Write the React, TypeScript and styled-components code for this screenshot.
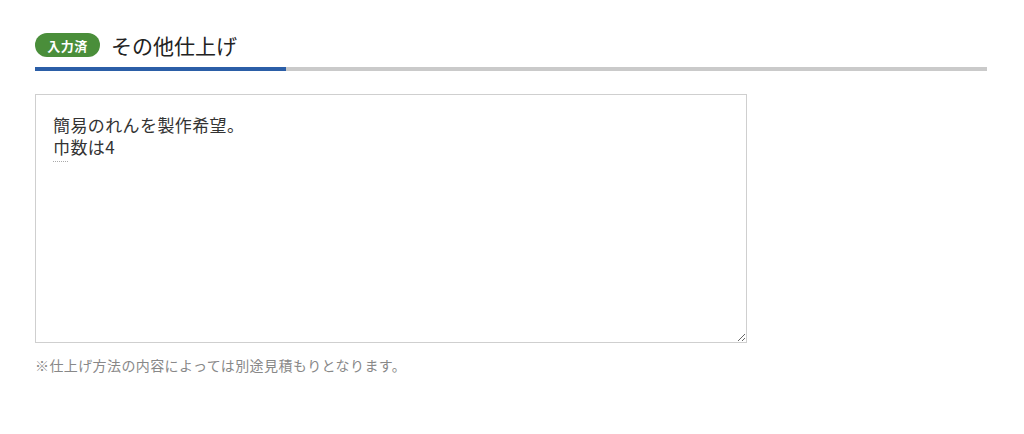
import styled, { createGlobalStyle } from "styled-components";

const GlobalStyle = createGlobalStyle`
  html, body {
    margin: 0;
    padding: 0;
    background: #fff;
  }
  body {
    font-family: "Noto Sans CJK JP", "Noto Sans", sans-serif;
    color: #222;
  }
`;

const App = () => {
  return (
    <>
      <GlobalStyle />
      <Section>
        <Header>
          <Badge>入力済</Badge>
          <Title>その他仕上げ</Title>
        </Header>
        <Progress>
          <ProgressFill $ratio={0.264} />
        </Progress>
        <FieldWrapper>
          <TextArea
            readOnly
            spellCheck={false}
            value={"簡易のれんを製作希望。\n巾数は4"}
          />
          <ImeMark />
        </FieldWrapper>
        <Note>※仕上げ方法の内容によっては別途見積もりとなります。</Note>
      </Section>
    </>
  );
};

export default App;

const Section = styled.div`
  width: 952px;
  padding: 31px 0 0 35px;
  display: flex;
  flex-direction: column;
`;

const Header = styled.div`
  display: flex;
  align-items: center;
  gap: 11px;
  height: 28px;
`;

const Badge = styled.span`
  display: inline-flex;
  align-items: center;
  justify-content: center;
  width: 65px;
  height: 24px;
  border-radius: 12px;
  background-color: #4a8e3a;
  color: #fff;
  font-size: 13px;
  font-weight: 700;
  letter-spacing: 0.5px;
`;

const Title = styled.h2`
  margin: 0;
  font-size: 21px;
  font-weight: 400;
  color: #222;
  line-height: 1;
`;

const Progress = styled.div`
  margin-top: 8px;
  width: 100%;
  height: 4px;
  background-color: #cacaca;
`;

const ProgressFill = styled.div<{ $ratio: number }>`
  width: ${(p) => p.$ratio * 100}%;
  height: 100%;
  background-color: #2b5ea7;
`;

const FieldWrapper = styled.div`
  position: relative;
  margin-top: 23px;
  width: 712px;
  height: 249px;
`;

const TextArea = styled.textarea`
  box-sizing: border-box;
  width: 100%;
  height: 100%;
  padding: 19px 17px;
  border: 1px solid #cfcfcf;
  border-radius: 0;
  outline: none;
  resize: both;
  font-family: "Noto Sans CJK JP", "Noto Sans", sans-serif;
  font-size: 17px;
  line-height: 22px;
  letter-spacing: 0.4px;
  color: #333;
  background: #fff;
`;

const ImeMark = styled.span`
  position: absolute;
  left: 18px;
  top: 67px;
  width: 15px;
  border-top: 1px dotted #aaa;
`;

const Note = styled.p`
  margin: 12px 0 0;
  font-size: 14px;
  letter-spacing: 0.4px;
  color: #888;
`;
